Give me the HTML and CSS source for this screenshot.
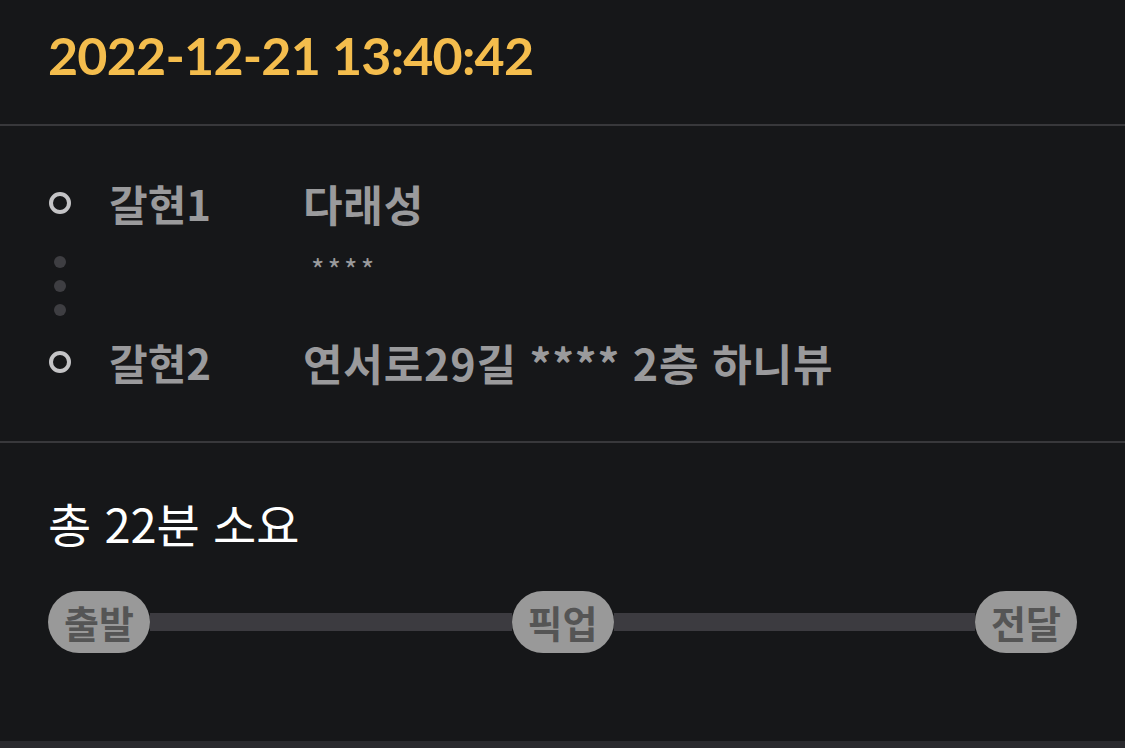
FILE: index.html
```html
<!DOCTYPE html>
<html lang="ko">
<head>
<meta charset="utf-8">
<link rel="stylesheet" href="styles.css">
</head>
<body>
<div class="screen">
  <header class="head">
    <div class="datetime">2022-12-21 13:40:42</div>
  </header>
  <section class="route">
    <div class="marker"><span class="ring"></span></div>
    <div class="name">갈현1</div>
    <div class="addr">다래성</div>

    <div class="dots"><span></span><span></span><span></span></div>
    <div class="name"></div>
    <div class="detail">****</div>

    <div class="marker"><span class="ring"></span></div>
    <div class="name">갈현2</div>
    <div class="addr">연서로29길 **** 2층 하니뷰</div>
  </section>
  <section class="summary">
    <div class="total">총 22분 소요</div>
    <div class="timeline">
      <span class="pill">출발</span>
      <span class="track"></span>
      <span class="pill">픽업</span>
      <span class="track"></span>
      <span class="pill">전달</span>
    </div>
  </section>
  <div class="bottom"></div>
</div>
</body>
</html>
```

FILE: styles.css
```css
* { box-sizing: border-box; }
html, body { margin: 0; padding: 0; }
body {
  background: #161719;
  font-family: "Noto Sans CJK KR", "Noto Sans", sans-serif;
  width: 1125px;
  height: 748px;
  overflow: hidden;
}
.screen {
  display: flex;
  flex-direction: column;
  height: 748px;
}
.head {
  height: 126px;
  padding: 24px 48px 0;
  border-bottom: 2px solid #38383b;
}
.datetime {
  font-family: "Lato", sans-serif;
  font-weight: 700;
  font-size: 52px;
  line-height: 62px;
  color: #f4bd4d;
  letter-spacing: -0.8px;
}
.route {
  height: 317px;
  border-bottom: 2px solid #38383b;
  padding: 53px 48px 0 49px;
  display: grid;
  grid-template-columns: 60px 194px 1fr;
  grid-template-rows: 48px 111px 48px;
  align-items: start;
}
.marker {
  height: 48px;
  display: flex;
  align-items: center;
}
.ring {
  width: 22px;
  height: 22px;
  border: 4px solid #c4c4c6;
  border-radius: 50%;
}
.name, .addr {
  font-weight: 700;
  font-size: 42px;
  line-height: 48px;
  color: #9a9a9c;
}
.addr {
  font-size: 43px;
  letter-spacing: 0.8px;
}
.dots {
  padding: 29px 0 0 5px;
  display: flex;
  flex-direction: column;
  gap: 12px;
}
.dots span {
  width: 12px;
  height: 12px;
  border-radius: 50%;
  background: #3e3e42;
}
.detail {
  padding: 27px 0 0 8px;
  font-size: 29px;
  line-height: 28px;
  color: #9a9a9c;
  letter-spacing: 3px;
}
.summary {
  flex: 1;
  padding: 56px 48px 0;
}
.total {
  font-size: 47px;
  line-height: 48px;
  color: #ffffff;
}
.timeline {
  margin-top: 44px;
  display: flex;
  align-items: center;
}
.pill {
  height: 62px;
  width: 102px;
  border-radius: 31px;
  background: #999999;
  color: #555555;
  font-weight: 700;
  font-size: 38px;
  line-height: 62px;
  display: flex;
  align-items: center;
  justify-content: center;
  flex: none;
}
.track {
  flex: 1;
  height: 18px;
  background: #3c3b40;
}
.bottom {
  height: 7px;
  background: #2a2a2e;
}
```
